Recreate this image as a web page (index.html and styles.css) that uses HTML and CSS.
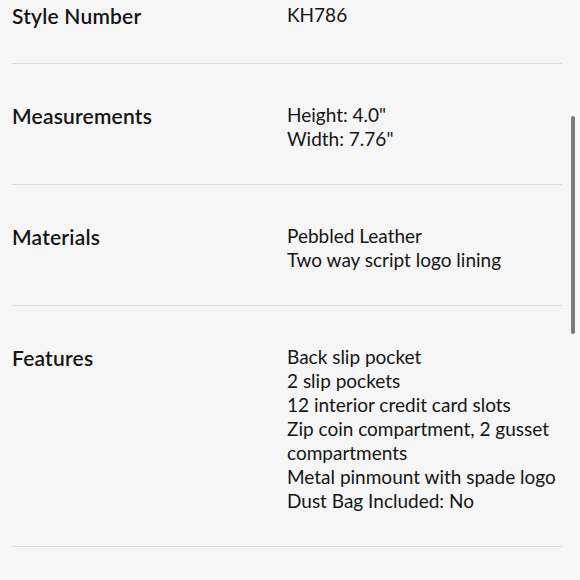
FILE: index.html
```html
<!DOCTYPE html>
<html lang="en">
<head>
<meta charset="utf-8">
<link rel="stylesheet" href="styles.css">
</head>
<body>
<div class="viewport">
  <div class="specs">
    <div class="row first">
      <div class="label">Style Number</div>
      <div class="value"><div>KH786</div></div>
    </div>
    <div class="row">
      <div class="label">Measurements</div>
      <div class="value"><div>Height: 4.0"</div><div>Width: 7.76"</div></div>
    </div>
    <div class="row">
      <div class="label">Materials</div>
      <div class="value"><div>Pebbled Leather</div><div>Two way script logo lining</div></div>
    </div>
    <div class="row">
      <div class="label">Features</div>
      <div class="value">
        <div>Back slip pocket</div>
        <div>2 slip pockets</div>
        <div>12 interior credit card slots</div>
        <div>Zip coin compartment, 2 gusset compartments</div>
        <div>Metal pinmount with spade logo</div>
        <div>Dust Bag Included: No</div>
      </div>
    </div>
    <div class="row">
      <div class="label">&nbsp;</div>
      <div class="value"><div>&nbsp;</div></div>
    </div>
  </div>
  <div class="scrollbar"></div>
</div>
</body>
</html>
```

FILE: styles.css
```css
html, body {
  margin: 0;
  padding: 0;
  background: #f6f6f6;
}
.viewport {
  position: relative;
  width: 580px;
  height: 580px;
  overflow: hidden;
  font-family: Lato, "Noto Sans", sans-serif;
  color: #151515;
}
.specs {
  margin: -36px 18px 0 12px;
}
.row {
  display: grid;
  grid-template-columns: 275px 1fr;
  align-items: start;
  padding: 37px 0 33px;
  border-bottom: 1px solid #dcdcdc;
}
.label {
  font-size: 21px;
  font-weight: 600;
  line-height: 28px;
  letter-spacing: 0.2px;
  padding-top: 1px;
}
.value {
  font-size: 19px;
  line-height: 24px;
  padding-top: 2px;
}
.scrollbar {
  position: absolute;
  left: 571px;
  top: 116px;
  width: 4px;
  height: 218px;
  border-radius: 2px;
  background: #7b7b7b;
}
```
